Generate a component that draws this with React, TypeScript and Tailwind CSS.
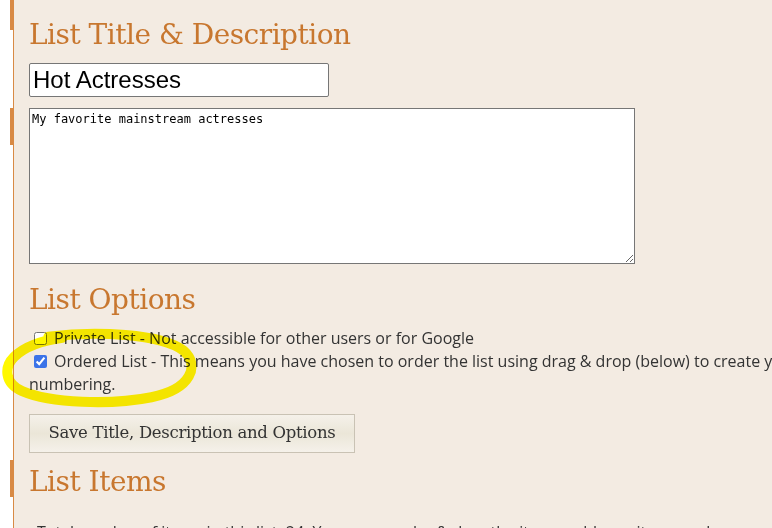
import { useState } from "react";

const heading = "text-[#c8772f] text-[28px] leading-none font-['DejaVu_Serif',serif] tracking-[-0.5px]";

export default function App() {
  const [title, setTitle] = useState("Hot Actresses");
  const [desc, setDesc] = useState("My favorite mainstream actresses");
  const [priv, setPriv] = useState(false);
  const [ordered, setOrdered] = useState(true);

  return (
    <div className="w-[772px] h-[528px] overflow-hidden flex bg-white">
      <div className="w-[13px] shrink-0 relative">
        <div className="absolute right-0 top-0 w-[3px] h-[30px] bg-[#d88a45]" />
        <div className="absolute right-0 top-[108px] w-[3px] h-[37px] bg-[#d88a45]" />
        <div className="absolute right-0 top-[460px] w-[3px] h-[37px] bg-[#d88a45]" />
      </div>
      <div className="relative flex-1 bg-[#f3ebe2] border-l border-[#d88a45] pl-[15px] pt-[21px]">
        <div className="w-[840px]">
          <h2 className={heading}>List Title &amp; Description</h2>
          <input
            value={title}
            onChange={(e) => setTitle(e.target.value)}
            className="mt-[14px] block w-[300px] h-[34px] bg-white border border-[#767676] rounded-[2px] px-[3px] text-[24px] text-black font-['Liberation_Sans',sans-serif] outline-none"
          />
          <textarea
            value={desc}
            onChange={(e) => setDesc(e.target.value)}
            className="mt-[11px] block w-[606px] h-[156px] bg-white border border-[#767676] px-[2px] py-[3px] text-[12px] leading-[15px] text-black font-['DejaVu_Sans_Mono',monospace] outline-none resize"
          />
          <h2 className={`${heading} mt-[22px]`}>List Options</h2>
          <div className="mt-[13px] text-[16px] leading-[23px] text-[#333] font-['Open_Sans',sans-serif]">
            <label className="flex items-center pl-[5px]">
              <input
                type="checkbox"
                checked={priv}
                onChange={() => setPriv(!priv)}
                className="w-[13px] h-[13px] m-0 mr-[7px]"
              />
              Private List - Not accessible for other users or for Google
            </label>
            <div>
              <label className="pl-[5px]">
                <input
                  type="checkbox"
                  checked={ordered}
                  onChange={() => setOrdered(!ordered)}
                  className="w-[13px] h-[13px] m-0 mr-[7px] align-[-1px] accent-[#3b73e8]"
                />
                Ordered List - This means you have chosen to order the list using drag &amp; drop (below) to create your own numbering.
              </label>
            </div>
          </div>
          <button className="mt-[18px] block w-[326px] h-[39px] border border-[#c9c2b4] bg-gradient-to-b from-[#f5f1ea] via-[#ebe6d8] to-[#f5f1ea] text-[16.5px] text-[#333] font-['DejaVu_Serif',serif] tracking-[-0.3px]">
            Save Title, Description and Options
          </button>
          <h2 className={`${heading} mt-[15px]`}>List Items</h2>
          <p className="mt-[24px] pl-[8px] text-[16px] leading-[24px] text-[#333] font-['Open_Sans',sans-serif]">
            Total number of items in this list: 24. You can reorder &amp; drag the items, add new items and remove items below.
          </p>
        </div>
        <svg
          className="absolute left-[-14px] top-[328px] pointer-events-none mix-blend-multiply"
          width="212"
          height="82"
          viewBox="0 0 210 80"
        >
          <path
            d="M48 8 C95 2 160 5 182 22 C198 36 190 60 150 68 C110 76 50 74 22 62 C4 54 4 38 14 28 C24 18 40 12 62 9"
            fill="none"
            stroke="#fff800"
            strokeWidth="10"
            strokeLinecap="round"
          />
        </svg>
      </div>
    </div>
  );
}
